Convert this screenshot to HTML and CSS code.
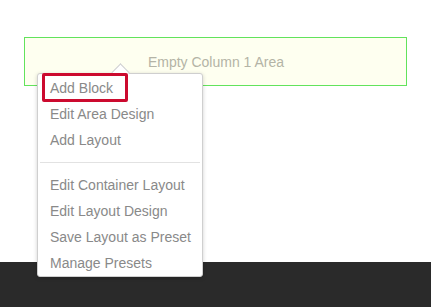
FILE: index.html
```html
<!DOCTYPE html>
<html lang="en">
<head>
    <meta charset="UTF-8">
    <title>Area Menu</title>
    <link rel="stylesheet" href="styles.css">
</head>
<body>
    <div class="page">
        <div class="area">Empty Column 1 Area</div>
        <div class="footer"></div>

        <div class="menu">
            <span class="highlight"></span>
            <ul>
                <li>Add Block</li>
                <li>Edit Area Design</li>
                <li>Add Layout</li>
            </ul>
            <div class="divider"></div>
            <ul>
                <li>Edit Container Layout</li>
                <li>Edit Layout Design</li>
                <li>Save Layout as Preset</li>
                <li>Manage Presets</li>
            </ul>
        </div>
    </div>
</body>
</html>
```

FILE: styles.css
```css
body {
    margin: 0;
    background: #fff;
    font-family: "Liberation Sans", Arial, sans-serif;
    font-size: 14px;
}
.page {
    position: relative;
    display: flex;
    flex-direction: column;
    height: 307px;
    overflow: hidden;
}
.area {
    margin: 37px 24px 0;
    height: 47px;
    border: 1px solid #62e35c;
    background: #fefff0;
    color: #b4b4a6;
    display: flex;
    align-items: center;
    justify-content: center;
    padding-left: 1px;
}
.footer {
    margin-top: auto;
    height: 45px;
    background: #2a2a2a;
}
.menu {
    position: absolute;
    top: 73px;
    left: 37px;
    width: 164px;
    padding: 1px 0 0;
    background: #fff;
    border: 1px solid #cfcfcf;
    border-radius: 3px;
    box-shadow: 0 1px 4px rgba(0, 0, 0, 0.18);
}
.menu::before {
    content: "";
    position: absolute;
    top: -8px;
    left: 76px;
    width: 12px;
    height: 12px;
    background: #fff;
    border-top: 1px solid #cfcfcf;
    border-left: 1px solid #cfcfcf;
    transform: rotate(45deg);
}
.menu ul {
    list-style: none;
    margin: 0;
    padding: 0;
    position: relative;
}
.menu li {
    height: 26px;
    line-height: 26px;
    padding-left: 12px;
    color: #898989;
    white-space: nowrap;
}
.divider {
    height: 1px;
    margin: 9px 2px;
    background: #e2e2e2;
}
.highlight {
    position: absolute;
    top: -1px;
    left: 4px;
    width: 80px;
    height: 23px;
    border: 3px solid #cc0a2f;
    border-radius: 2px;
    z-index: 2;
}
```
